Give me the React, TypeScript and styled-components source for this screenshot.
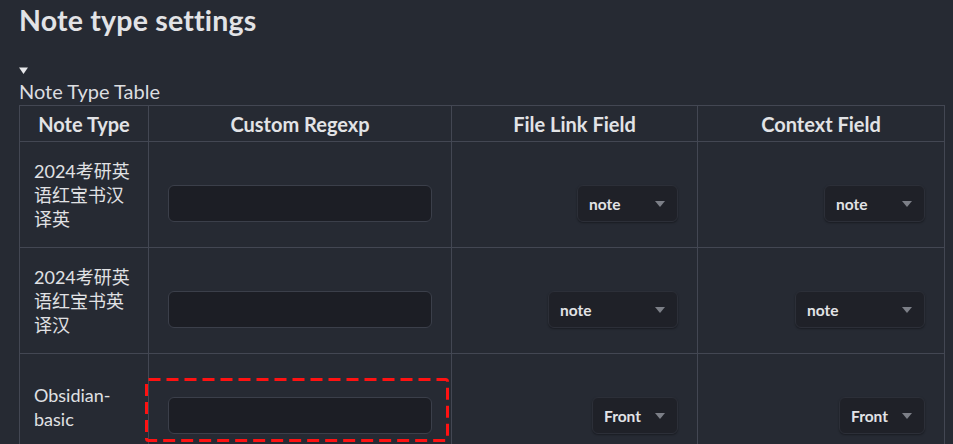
import React from "react";
import styled, { createGlobalStyle } from "styled-components";

const Global = createGlobalStyle`
  html, body { margin: 0; padding: 0; background: #262a33; }
  body {
    font-family: Lato, "Noto Sans CJK SC", sans-serif;
    color: #dcdde0;
    width: 953px;
    height: 444px;
    overflow: hidden;
  }
`;

const Page = styled.div`
  padding: 0 9px 0 19px;
`;

const Title = styled.h2`
  margin: 0;
  padding-top: 3px;
  font-size: 28.5px;
  line-height: 34px;
  font-weight: 700;
  color: #e2e3e6;
  letter-spacing: 0.2px;
`;

const Marker = styled.div`
  margin-top: 26px;
  height: 14px;
  display: flex;
  align-items: center;
  svg { display: block; }
`;

const Caption = styled.div`
  font-size: 20px;
  line-height: 24px;
  height: 28px;
  padding-top: 2px;
  box-sizing: border-box;
  color: #dcdde0;
`;

const Table = styled.table`
  border-collapse: collapse;
  table-layout: fixed;
  width: 926px;
  border: 1px solid #434753;
`;

const Th = styled.th`
  border: 1px solid #434753;
  height: 35px;
  padding: 0;
  font-size: 20px;
  font-weight: 700;
  text-align: center;
  vertical-align: middle;
  color: #e2e3e6;
`;

const NameCell = styled.td`
  border: 1px solid #434753;
  padding: 0 14px;
  font-family: Lato, "Noto Sans CJK SC", sans-serif;
  font-size: 18px;
  line-height: 24px;
  vertical-align: middle;
  color: #e0e1e4;
`;

const ControlCell = styled.td<{ $align?: "left" | "right" }>`
  position: relative;
  border: 1px solid #434753;
  padding: 43px 19px 25px;
  text-align: ${(p) => p.$align || "left"};
  vertical-align: top;
`;

const TextInput = styled.input`
  display: block;
  box-sizing: border-box;
  width: 264px;
  height: 37px;
  margin: 0;
  padding: 0 10px;
  background: #1c1e25;
  border: 1px solid #3b3f4a;
  border-radius: 6px;
  color: #dcdde0;
  font-size: 15px;
  outline: none;
`;

const Select = styled.div<{ $w: number }>`
  display: inline-flex;
  box-sizing: border-box;
  width: ${(p) => p.$w}px;
  height: 37px;
  align-items: center;
  justify-content: space-between;
  padding: 0 12px 0 11px;
  background: #1f2128;
  border: 1px solid #2c2f38;
  border-radius: 6px;
  box-shadow: 0 1px 2px rgba(0, 0, 0, 0.35);
  font-size: 15.5px;
  font-weight: 700;
  color: #e2e3e6;
  vertical-align: top;
  svg { display: block; flex: none; }
`;

const Highlight = styled.div`
  position: absolute;
  left: -4px;
  top: 24px;
  width: 304px;
  height: 64px;
  box-sizing: border-box;
  pointer-events: none;
  svg { display: block; }
`;

const Arrow = () => (
  <svg width="10" height="6" viewBox="0 0 10 6">
    <path d="M0 0 H10 L5 6 Z" fill="#7c7f87" />
  </svg>
);

const Dropdown = ({ value, w }: { value: string; w: number }) => (
  <Select $w={w}>
    <span>{value}</span>
    <Arrow />
  </Select>
);

const rows = [
  { name: "2024考研英语红宝书汉译英", value: "note", w: 101, mark: false },
  { name: "2024考研英语红宝书英译汉", value: "note", w: 130, mark: false },
  { name: "Obsidian-basic", value: "Front", w: 86, mark: true },
];

export default function App() {
  return (
    <>
      <Global />
      <Page>
        <Title>Note type settings</Title>
        <Marker>
          <svg width="9" height="7" viewBox="0 0 9 7">
            <path d="M0 0.5 H9 L4.5 7 Z" fill="#e6e7ea" />
          </svg>
        </Marker>
        <Caption>Note Type Table</Caption>
        <Table>
          <colgroup>
            <col style={{ width: 129 }} />
            <col style={{ width: 303 }} />
            <col style={{ width: 246 }} />
            <col style={{ width: 247 }} />
          </colgroup>
          <thead>
            <tr>
              <Th>Note Type</Th>
              <Th>Custom Regexp</Th>
              <Th>File Link Field</Th>
              <Th>Context Field</Th>
            </tr>
          </thead>
          <tbody>
            {rows.map((r) => (
              <tr key={r.name}>
                <NameCell>{r.name}</NameCell>
                <ControlCell>
                  <TextInput type="text" />
                  {r.mark && (
                    <Highlight>
                      <svg width="304" height="64" viewBox="0 0 304 64">
                        <rect
                          x="1.5"
                          y="1.5"
                          width="301"
                          height="61"
                          rx="2"
                          fill="none"
                          stroke="#ff1212"
                          strokeWidth="3"
                          strokeDasharray="12 6"
                        />
                      </svg>
                    </Highlight>
                  )}
                </ControlCell>
                <ControlCell $align="right">
                  <Dropdown value={r.value} w={r.w} />
                </ControlCell>
                <ControlCell $align="right">
                  <Dropdown value={r.value} w={r.w} />
                </ControlCell>
              </tr>
            ))}
          </tbody>
        </Table>
      </Page>
    </>
  );
}
